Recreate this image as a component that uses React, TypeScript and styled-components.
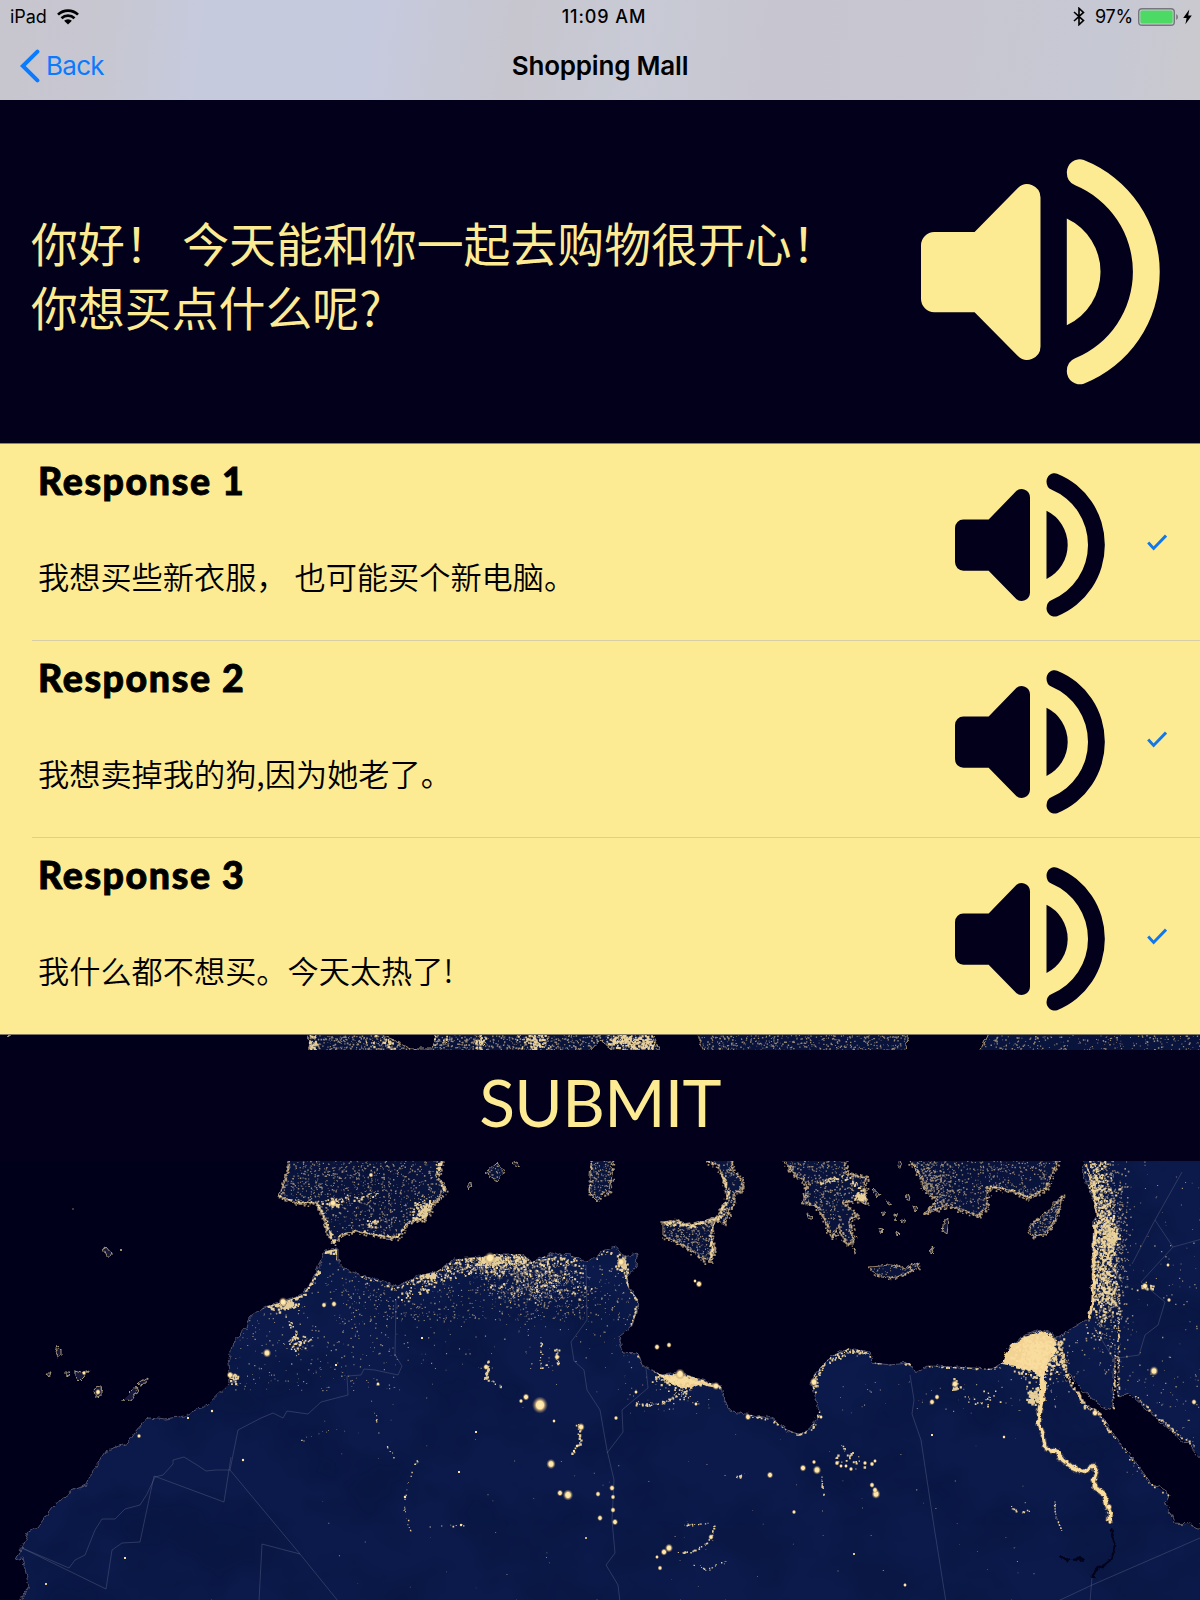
import React from 'react';
import styled, { createGlobalStyle } from 'styled-components';

const NAVY = '#02001a';
const CREAM = '#fdeb94';

const GlobalStyle = createGlobalStyle`
  *, *::before, *::after { box-sizing: border-box; }
  body { margin: 0; background: ${NAVY}; }
`;

const Screen = styled.div`
  width: 1200px;
  height: 1600px;
  display: flex;
  flex-direction: column;
  overflow: hidden;
  background: ${NAVY};
  font-family: Inter, 'Liberation Sans', sans-serif;
  color: #000;
`;

const TopBar = styled.header`
  height: 100px;
  flex: none;
  background: linear-gradient(98deg, #c7c6cf 0%, #c7c7d1 9%, #c6cadd 17%, #c6cade 31%, #c6c8d6 37%, #c7c6cf 43%,
    #c8cad5 53%, #c7c6d0 64%, #c8c7d1 80%, #c6c8d4 91%, #cac9ce 100%);
`;

const StatusBar = styled.div`
  height: 33px;
  display: grid;
  grid-template-columns: 1fr auto 1fr;
  align-items: center;
  padding: 0 8px 0 10px;
  font-size: 18px;
`;

const StatusGroup = styled.div<{ $end?: boolean }>`
  display: flex;
  align-items: center;
  justify-content: ${(p) => (p.$end ? 'flex-end' : 'flex-start')};
`;

const Carrier = styled.span`
  margin-right: 10px;
  letter-spacing: -0.1px;
`;

const Clock = styled.span`
  font-weight: 500;
  letter-spacing: 0.9px;
  padding-left: 6px;
`;

const Percent = styled.span`
  margin: 0 5px 0 10px;
  letter-spacing: -0.2px;
`;

const NavBar = styled.nav`
  height: 65px;
  display: grid;
  grid-template-columns: 1fr auto 1fr;
  align-items: center;
  padding: 0 20px;
`;

const BackButton = styled.button`
  display: flex;
  align-items: center;
  gap: 6px;
  justify-self: start;
  border: 0;
  padding: 0;
  background: none;
  color: #0a7aff;
  font: 400 26px/32px Inter, 'Liberation Sans', sans-serif;
  letter-spacing: -0.7px;
`;

const Title = styled.h1`
  margin: 0;
  font-size: 26px;
  line-height: 32px;
  font-weight: 600;
  letter-spacing: -0.2px;
`;

const Prompt = styled.section`
  height: 343px;
  flex: none;
  display: flex;
  justify-content: space-between;
  padding: 59px 40px 0 31px;
  color: ${CREAM};
`;

const PromptText = styled.p`
  margin: 52px 0 0;
  font: 400 46.9px/63.5px 'Noto Sans CJK SC', sans-serif;
  white-space: pre;
`;

const Responses = styled.ul`
  list-style: none;
  margin: 0;
  padding: 0;
  flex: none;
  border-top: 1px solid #8f866a;
  background: ${CREAM};
`;

const ResponseRow = styled.li<{ $last?: boolean }>`
  height: 197px;
  display: flex;
  margin-left: ${(p) => (p.$last ? 0 : 32)}px;
  padding: 29px 33px 0 ${(p) => (p.$last ? 38 : 6)}px;
  border-bottom: 1px solid ${(p) => (p.$last ? '#7d7763' : '#d8cda9')};
`;

const ResponseBody = styled.div`
  flex: 1;
  margin-top: -14px;
`;

const ResponseTitle = styled.h2`
  margin: 0;
  font: 900 37.5px/44px Lato, 'Open Sans', sans-serif;
  letter-spacing: 1.6px;
  -webkit-text-stroke: 0.9px #000;
`;

const ResponseText = styled.p`
  margin: 50px 0 0;
  font: 400 31.2px/46px 'Noto Sans CJK SC', sans-serif;
  font-weight: 350;
  white-space: pre;
`;

const CheckIcon = styled.svg`
  display: block;
  margin: 61px 0 0 42px;
`;

const Stage = styled.main`
  flex: 1;
  display: grid;
  grid-template: 565px / 1200px;
`;

const NightMap = styled.svg`
  grid-area: 1 / 1;
  display: block;
`;

const SubmitButton = styled.button`
  grid-area: 1 / 1;
  z-index: 1;
  align-self: start;
  height: 111px;
  margin-top: 15px;
  border: 0;
  padding: 0 0 8px;
  background: ${NAVY};
  color: ${CREAM};
  font: 400 66px/103px Lato, 'Open Sans', sans-serif;
  letter-spacing: -0.7px;
`;

const IconSvg = styled.svg`
  display: block;
  flex: none;
`;

const ChargeBolt = styled(IconSvg)`
  margin-left: 4px;
`;

function Speaker({ width, height, color }: { width: number; height: number; color: string }) {
  return (
    <IconSvg width={width} height={height} viewBox="63 57 718 677" preserveAspectRatio="none" fill={color}>
      <path d="M103 276H224L354 144A40 40 0 0 1 422 172V619A40 40 0 0 1 354 647L224 516H103A40 40 0 0 1 63 476V316A40 40 0 0 1 103 276Z" />
      <path d="M501 235A177 177 0 0 1 501 555Z" />
      <path d="M501 97A39 39 0 0 1 552 60A360 360 0 0 1 552 730A39 39 0 0 1 501 693Q501 664 526 654A280 280 0 0 0 526 136Q501 126 501 97Z" />
    </IconSvg>
  );
}

/* ---------- Night-time map ---------- */

const AFRICA =
  'M20 1600L29 1587L25 1570L22 1558L16 1560L22 1547L28 1533L38 1527L48 1513L60 1499L69 1492L86 1485L92 1472L107 1450L128 1443L135 1433L149 1417L166 1419L184 1416L207 1405L230 1383L228 1363L233 1343L246 1328L249 1317L264 1307L283 1302L302 1295L308 1287L318 1270L325 1251L337 1249L337 1260L346 1270L360 1275L377 1280L396 1287L421 1275L436 1272L455 1259L482 1257L494 1254L522 1254L532 1262L553 1253L570 1255L585 1261L597 1257L600 1252L615 1247L623 1257L637 1254L636 1267L627 1277L629 1288L638 1300L637 1312L631 1327L619 1337L623 1352L638 1353L642 1365L661 1375L680 1373L703 1380L721 1386L724 1402L732 1412L753 1415L772 1419L787 1430L799 1434L810 1430L819 1410L812 1385L814 1375L830 1357L849 1348L870 1352L872 1362L889 1365L910 1363L916 1373L929 1366L956 1367L992 1369L1002 1363L1009 1347L1025 1335L1042 1330L1057 1337L1078 1325L1089 1318L1092 1303L1092 1253L1094 1220L1099 1213L1090 1193L1085 1180L1082 1167L1088 1150L1202 1150L1202 1602L20 1602Z';
const RED_SEA =
  'M1064 1377L1069 1373L1082 1390L1097 1403L1110 1411L1113 1397L1115 1357L1118 1357L1118 1397L1130 1394L1147 1410L1170 1430L1191 1447L1202 1460L1202 1530L1189 1524L1174 1523L1166 1503L1170 1495L1151 1483L1136 1463L1115 1437L1101 1415L1084 1403L1075 1390Z';
const IBERIA =
  'M289 1150L289 1161L285 1180L279 1197L298 1203L316 1203L323 1217L327 1233L334 1244L341 1235L356 1231L385 1237L398 1238L408 1222L425 1220L434 1203L446 1190L438 1177L443 1161L443 1150Z';
const ITALY =
  'M700 1150L707 1161L719 1167L724 1183L727 1197L720 1210L717 1220L724 1224L728 1213L734 1203L734 1193L742 1192L742 1178L732 1172L731 1161L731 1150Z';
const SICILY = 'M663 1222L676 1220L690 1225L717 1217L711 1233L714 1250L711 1262L699 1257L682 1245L663 1235Z';
const SARDINIA = 'M591 1150L591 1161L589 1193L597 1201L602 1194L610 1193L613 1161L613 1150Z';
const GREECE =
  'M780 1150L784 1161L795 1175L807 1183L803 1202L818 1207L826 1223L832 1238L839 1227L845 1243L854 1243L849 1220L858 1217L849 1207L843 1202L858 1200L867 1203L864 1187L866 1177L845 1173L845 1150Z';
const ANATOLIA =
  'M910 1150L910 1161L921 1177L925 1190L937 1200L925 1213L948 1205L967 1212L977 1216L987 1207L987 1187L1009 1190L1029 1198L1046 1188L1057 1163L1060 1150Z';
const CRETE = 'M869 1267L875 1275L895 1278L918 1268L919 1262L906 1268L891 1265Z';
const CYPRUS = 'M1029 1228L1036 1220L1046 1213L1063 1195L1055 1220L1046 1233L1032 1237Z';
const MAJORCA = 'M486 1173L497 1163L505 1172L497 1181Z';
const NORTH_STRIP =
  'M308 1030H369L394 1040L411 1049L432 1049L436 1030H650L660 1052H615L600 1040L589 1052H309ZM694 1030H908L905 1052H705ZM990 1030H1202V1052H980Z';
const EUROPE = [IBERIA, ITALY, SICILY, SARDINIA, GREECE, ANATOLIA, CRETE, CYPRUS, MAJORCA, NORTH_STRIP].join('');

const ISLETS =
  'M103 1249l3 -2l5 6l0 3l-5 0zM58 1346l3 3l0 6l-3 2l-2 -5zM46 1373l5 0l-2 4zM65 1372l4 0l-1 3l-3 -1zM75 1371l6 2l8 -3l-5 7l-5 5l-4 -5zM94 1391l4 -5l4 3l0 7l-6 2zM122 1401l10 -10l3 -5l2 5l-6 9zM138 1384l9 -6l-1 6l-7 1zM466 1187l3 -4l3 2l-4 5zM513 1163l4 -2l3 6l-3 1zM944 1221l4 -2l-2 15l-4 -3zM931 1244l3 8l-2 2zM853 1247l4 5l-2 1zM872 1190l8 5l-2 3zM886 1199l6 5l-3 1zM904 1198l6 -3l-1 5zM882 1210l3 2l-1 4zM895 1214l3 1l-2 5zM901 1222l5 -3l-2 5zM878 1229l5 1l-3 3zM896 1231l4 2l-3 3zM913 1206l5 2l-3 3zM8 1036l4 0l-2 1zM897 1166l2 -8l3 6l-1 5zM807 1213l4 2l1 4l-3 0z';

const BORDERS =
  'M396 1300L395 1355L402 1366L398 1375L375 1370L364 1369L361 1375L347 1376L348 1395L321 1402L308 1414L287 1411L283 1418L273 1413L261 1418L238 1430L230 1470L300 1554L338 1601M230 1470L216 1470L206 1471L197 1465L184 1457L173 1460L173 1464L163 1475L155 1477L147 1494L140 1505L125 1509L115 1519L102 1519L95 1530L85 1555L75 1560L69 1568L22 1548L106 1589L112 1550L122 1543L140 1542L154 1476L224 1502L231 1457M259 1601L262 1544L300 1554M586 1265L587 1320L571 1342L574 1361L584 1370L587 1390L600 1410L607 1450L614 1480L612 1520L615 1553L606 1565L618 1585L620 1602M646 1368L648 1388L622 1410L623 1432L607 1453M910 1375L914 1400L912 1414L921 1440L933 1520L946 1602M1200 1538L1092 1585L1058 1601M1155 1220L1132 1264M1155 1220L1173 1247L1141 1282L1165 1302L1158 1325L1145 1335L1139 1355L1118 1358M1173 1247L1202 1239M1182 1172L1155 1220M1094 1327L1116 1363M1092 1577L1090 1602';

function createRandom(seed: number) {
  let s = seed;
  return () => {
    s = (s + 0x6d2b79f5) | 0;
    let t = Math.imul(s ^ (s >>> 15), 1 | s);
    t = (t + Math.imul(t ^ (t >>> 7), 61 | t)) ^ t;
    return ((t ^ (t >>> 14)) >>> 0) / 4294967296;
  };
}

const random = createRandom(7431);
const gauss = () => random() + random() + random() - 1.5;

function dot(x: number, y: number, s: number) {
  return `M${x.toFixed(1)} ${y.toFixed(1)}h${s.toFixed(1)}v${s.toFixed(1)}h-${s.toFixed(1)}z`;
}

/* Rows are [x, y, width, height, count, dot size] */
type Area = [number, number, number, number, number, number];

function uniform(areas: Area[]) {
  let d = '';
  areas.forEach(([x, y, w, h, n, s]) => {
    for (let i = 0; i < n; i++) d += dot(x + random() * w, y + random() * h, s * (0.5 + random() * 0.8));
  });
  return d;
}

/* Rows are [cx, cy, rx, ry, count, dot size] */
function clustered(areas: Area[]) {
  let d = '';
  areas.forEach(([x, y, rx, ry, n, s]) => {
    for (let i = 0; i < n; i++) d += dot(x + gauss() * rx, y + gauss() * ry, s * (0.5 + random() * 0.9));
  });
  return d;
}

function along(points: number[][], perPx: number, spread: number, size: number) {
  let d = '';
  for (let i = 1; i < points.length; i++) {
    const [ax, ay] = points[i - 1];
    const [bx, by] = points[i];
    const n = Math.max(1, Math.round(Math.hypot(bx - ax, by - ay) * perPx));
    for (let k = 0; k < n; k++) {
      const t = random();
      d += dot(ax + (bx - ax) * t + gauss() * spread, ay + (by - ay) * t + gauss() * spread, size * (0.5 + random()));
    }
  }
  return d;
}

/* Parses an absolute M/L outline into its points so that lights can follow the coast */
function outline(path: string) {
  return path
    .replace(/[MZ]/g, '')
    .split('L')
    .map((p) => p.split(' ').map(Number));
}

const DIM_LIGHTS =
  uniform([
    [279, 1155, 170, 90, 1300, 1.2],
    [308, 1035, 350, 16, 1000, 1.3],
    [694, 1035, 215, 16, 500, 1.2],
    [980, 1035, 220, 16, 240, 1.2],
    [663, 1215, 55, 48, 520, 1.2],
    [587, 1155, 28, 48, 260, 1.2],
    [700, 1155, 45, 70, 330, 1.2],
    [780, 1155, 90, 90, 900, 1.2],
    [905, 1155, 155, 65, 1000, 1.2],
    [1028, 1193, 36, 44, 320, 1.1],
    [869, 1260, 52, 20, 90, 1],
    [485, 1162, 22, 20, 80, 1.1],
    [230, 1260, 170, 130, 420, 1.1],
    [340, 1265, 290, 55, 600, 1.1],
    [400, 1300, 230, 70, 140, 1],
    [1130, 1160, 70, 260, 90, 1.1],
    [620, 1350, 90, 65, 70, 1],
    [820, 1380, 240, 35, 50, 1],
    [300, 1380, 320, 220, 40, 0.9],
    [640, 1430, 400, 160, 50, 0.9],
    [1120, 1370, 80, 110, 80, 1.1],
  ]) +
  clustered([
    [535, 1280, 46, 26, 640, 1.1],
    [495, 1264, 60, 12, 500, 1.1],
    [330, 1180, 70, 40, 200, 1],
    [1108, 1240, 19, 110, 1300, 1.2],
    [1046, 1358, 34, 30, 260, 1.2],
    [930, 1185, 26, 34, 320, 1.3],
  ]);

const COAST_LIGHTS =
  along(outline(IBERIA), 1, 2.2, 1.3) +
  along(outline(ITALY), 1.2, 3, 1.3) +
  along(outline(SICILY), 1.2, 2.4, 1.3) +
  along(outline(SARDINIA), 0.9, 2, 1.2) +
  along(outline(GREECE), 1.3, 3, 1.3) +
  along(outline(ANATOLIA), 1.3, 3, 1.3) +
  along(outline(CRETE), 0.8, 1.6, 1.1) +
  along(outline(CYPRUS), 1, 2, 1.2);

const LIGHTS =
  clustered([
    [536, 1278, 46, 24, 170, 1.6],
    [487, 1259, 12, 6, 120, 1.9],
    [505, 1260, 44, 8, 200, 1.6],
    [427, 1274, 14, 6, 80, 1.8],
    [283, 1304, 16, 6, 100, 1.8],
    [297, 1342, 8, 8, 45, 1.6],
    [232, 1378, 5, 5, 25, 1.8],
    [333, 1203, 6, 5, 40, 1.7],
    [373, 1222, 5, 4, 20, 1.7],
    [423, 1210, 9, 12, 110, 1.7],
    [861, 1197, 7, 7, 90, 1.7],
    [1103, 1250, 13, 70, 620, 1.7],
    [1104, 1290, 12, 22, 130, 1.7],
    [1112, 1236, 7, 12, 90, 1.8],
    [1096, 1180, 10, 35, 220, 1.5],
    [1037, 1355, 23, 21, 500, 1.8],
    [682, 1379, 24, 5, 240, 1.7],
    [682, 1388, 10, 14, 60, 1.4],
    [621, 1262, 5, 7, 60, 1.8],
    [405, 1041, 40, 7, 100, 1.7],
    [312, 1042, 5, 12, 60, 1.6],
    [535, 1041, 14, 10, 110, 1.7],
    [480, 1040, 5, 10, 40, 1.6],
    [640, 1043, 22, 10, 200, 1.7],
    [618, 1040, 14, 8, 90, 1.6],
    [1034, 1396, 7, 8, 100, 1.9],
    [955, 1385, 4, 8, 18, 1.8],
    [850, 1461, 18, 10, 14, 1.8],
    [980, 1400, 25, 8, 24, 1.4],
    [1145, 1286, 8, 4, 16, 1.8],
  ]) +
  along([[279, 1197], [298, 1203], [316, 1203], [325, 1220], [334, 1243], [341, 1235], [356, 1231], [398, 1238]], 1.2, 1.8, 1.5) +
  along([[316, 1203], [350, 1198], [380, 1193]], 0.8, 3, 1.4) +
  along([[325, 1251], [337, 1250], [337, 1260]], 2.5, 2, 1.8) +
  along([[398, 1238], [410, 1221], [434, 1205], [446, 1190], [438, 1174], [439, 1161]], 2, 3.4, 1.6) +
  along([[264, 1307], [302, 1295], [318, 1270]], 1.3, 2, 1.6) +
  along([[283, 1316], [295, 1330], [298, 1345], [318, 1336]], 0.6, 2.4, 1.3) +
  along([[360, 1275], [396, 1287], [436, 1272], [460, 1258], [522, 1256], [570, 1260], [610, 1252]], 0.9, 4, 1.5) +
  along([[396, 1298], [425, 1288], [455, 1270], [500, 1268]], 0.9, 6, 1.4) +
  along([[623, 1257], [628, 1285], [638, 1300], [632, 1325]], 1.8, 2, 1.6) +
  along([[636, 1353], [661, 1375], [721, 1386]], 1.1, 2, 1.6) +
  along([[635, 1403], [658, 1404], [678, 1395]], 1, 2, 1.3) +
  along([[813, 1390], [816, 1372], [830, 1358], [850, 1350], [870, 1353]], 2.2, 4, 1.2) +
  along([[872, 1362], [910, 1363], [956, 1367], [1000, 1367]], 0.7, 1.5, 1.5) +
  along([[745, 1415], [770, 1419], [799, 1434], [812, 1428], [819, 1410]], 0.5, 1.5, 1.5) +
  along([[707, 1161], [723, 1180], [727, 1197], [720, 1215]], 1.6, 3, 1.5) +
  along([[663, 1222], [690, 1225], [717, 1217], [712, 1235], [711, 1260]], 1.4, 2.5, 1.6) +
  along([[987, 1187], [1009, 1190], [1029, 1198], [1046, 1188]], 1.2, 2, 1.5) +
  along([[818, 1182], [845, 1176], [862, 1190]], 1.2, 2.5, 1.4) +
  along([[677, 1552], [690, 1552], [705, 1544], [712, 1535], [714, 1525]], 0.8, 1, 1.2) +
  along([[681, 1525], [709, 1523]], 0.6, 1, 1) +
  along([[692, 1565], [705, 1569], [726, 1562]], 0.5, 2, 1) +
  along([[541, 1335], [540, 1370], [548, 1363]], 0.5, 1, 1.2) +
  along([[488, 1360], [485, 1378]], 1.2, 1.6, 1.8) +
  along([[485, 1378], [502, 1386]], 0.6, 2, 1.5) +
  along([[557, 1350], [557, 1364]], 1.4, 2, 1.5) +
  along([[372, 1400], [380, 1437], [395, 1458]], 0.2, 1, 1) +
  along([[420, 1452], [407, 1485], [404, 1510], [411, 1532]], 0.3, 1, 1) +
  along([[430, 1527], [465, 1524]], 0.2, 1.2, 1.2) +
  along([[578, 1424], [580, 1440], [572, 1453]], 0.6, 2, 1.6) +
  along([[734, 1478], [744, 1474]], 1, 1.6, 1.2) +
  along([[821, 1475], [823, 1496]], 0.5, 0.8, 1.5) +
  along([[842, 1446], [853, 1458]], 0.9, 2.4, 1.4) +
  along([[1054, 1500], [1055, 1515], [1061, 1530]], 0.8, 0.6, 1.1) +
  along([[1010, 1506], [1020, 1513], [1028, 1510]], 0.6, 1.5, 1.3) +
  along([[297, 1442], [320, 1432], [345, 1429]], 0.2, 1.5, 1);

const RED_SEA_LIGHTS =
  along([[1057, 1337], [1063, 1360], [1066, 1374], [1084, 1405], [1098, 1412], [1110, 1432]], 1.1, 1.8, 1.6) +
  along([[1112, 1434], [1150, 1484], [1170, 1496]], 0.25, 1.2, 1.2) +
  along([[1133, 1394], [1149, 1409], [1172, 1429], [1195, 1447]], 0.6, 1.5, 1.4) +
  along([[1115, 1354], [1114, 1385], [1113, 1410]], 0.6, 1, 1.2) +
  along([[1119, 1290], [1118, 1350], [1118, 1395]], 0.7, 1.2, 1.2);

const CITIES: [number, number, number][] = [
  [540, 1405, 7], [551, 1464, 4.2], [568, 1495, 4.6], [560, 1493, 2.8], [581, 1427, 3.4], [526, 1397, 3],
  [267, 1353, 3.8], [283, 1302, 4], [334, 1304, 2.6], [324, 1305, 2.4], [490, 1258, 5], [486, 1367, 2.6],
  [557, 1357, 2.6], [598, 1494, 2.4], [600, 1518, 2.6], [612, 1488, 2.6], [613, 1497, 2.2], [613, 1510, 2.4],
  [615, 1522, 2.8], [669, 1548, 3.6], [664, 1552, 3], [660, 1568, 2.2], [657, 1557, 1.8], [711, 1537, 2.5],
  [699, 1284, 3], [695, 1281, 1.7], [657, 1347, 2.6], [669, 1345, 2.4], [770, 1475, 2.9], [803, 1468, 3],
  [817, 1470, 3.8], [814, 1462, 2], [837, 1463, 2.2], [841, 1466, 1.8], [846, 1466, 1.8], [851, 1469, 2],
  [865, 1463, 2], [872, 1464, 2.2], [875, 1461, 1.8], [872, 1485, 2.4], [876, 1494, 4], [875, 1490, 2.6],
  [794, 1512, 2], [1154, 1371, 4], [955, 1384, 3.4], [937, 1397, 2.4], [932, 1402, 2.6], [1095, 1413, 3],
  [814, 1382, 3.8], [680, 1374, 4.5], [716, 1386, 3.4], [748, 1417, 2.8], [1109, 1507, 3], [1110, 1522, 2],
  [333, 1203, 3.4], [371, 1175, 2.2], [230, 1375, 3], [139, 1436, 2], [98, 1392, 2.6], [84, 1373, 2],
  [905, 1585, 1.8], [1194, 1402, 2.5], [1145, 1286, 3], [1169, 1300, 2], [1168, 1265, 1.8], [621, 1262, 3.6],
  [476, 1432, 1.3], [459, 1472, 1.3], [46, 1584, 1.2], [586, 1538, 1.1], [243, 1460, 1.5], [405, 1497, 1.6],
  [461, 1525, 1.5], [188, 1418, 1.3], [212, 1411, 1.5], [422, 1338, 1.3], [336, 1365, 1.3], [378, 1384, 1.8],
  [696, 1404, 1.8], [636, 1392, 1.8], [616, 1418, 2], [821, 1417, 1.8], [932, 1435, 1.3], [1004, 1437, 1.6],
  [521, 1401, 2], [554, 1421, 1.7], [577, 1446, 1.6], [574, 1451, 1.5], [121, 1250, 1],
  [73, 1209, 0.8], [854, 1554, 1.2], [125, 1558, 1.3],
];

const NILE =
  'M1042 1376L1043 1395L1039 1412L1039 1425L1044 1438L1046 1449L1056 1451L1063 1460L1072 1467L1084 1472L1093 1466L1096 1472L1093 1482L1097 1490L1105 1496L1107 1505L1110 1513L1109 1522';
const LAKE =
  'M1111 1528l2 10l3 8l-4 6l0 6l-7 6l-6 4l-5 6l-1 5M1061 1557l5 3l4 -2M1072 1561l6 -3l5 2';

function Map() {
  return (
    <NightMap width="1200" height="565" viewBox="0 1035 1200 565">
      <defs>
        <clipPath id="land">
          <path d={AFRICA + EUROPE} />
        </clipPath>
        <filter id="rough" x="0" y="1030" width="1200" height="575" filterUnits="userSpaceOnUse" colorInterpolationFilters="sRGB">
          <feTurbulence type="fractalNoise" baseFrequency="0.14" numOctaves="3" seed="5" result="n" />
          <feDisplacementMap in="SourceGraphic" in2="n" scale="6" xChannelSelector="R" yChannelSelector="G" />
        </filter>
        <filter id="terrain" x="0" y="1030" width="1200" height="575" filterUnits="userSpaceOnUse" colorInterpolationFilters="sRGB">
          <feTurbulence type="fractalNoise" baseFrequency="0.012 0.014" numOctaves="4" seed="11" />
          <feColorMatrix values="0 0 0 0 0.02  0 0 0 0 0.03  0 0 0 0 0.15  2.2 0 0 0 -0.9" />
        </filter>
        <radialGradient id="city">
          <stop offset="0" stopColor="#fff0bd" />
          <stop offset="0.45" stopColor="#ffe3a0" />
          <stop offset="0.7" stopColor="#c9a878" stopOpacity="0.55" />
          <stop offset="1" stopColor="#8a7360" stopOpacity="0" />
        </radialGradient>
      </defs>
      <rect y="1035" width="1200" height="565" fill="#01001a" />
      <g filter="url(#rough)">
        <path d={AFRICA} fill="#0b1a4a" stroke="#68657a" strokeWidth="0.8" />
        <path d={EUROPE} fill="#0a153e" stroke="#b39c78" strokeWidth="0.9" />
        <path d={ISLETS} fill="#17193a" stroke="#b8a684" strokeWidth="0.9" />
      </g>
      <g clipPath="url(#land)">
        <rect y="1035" width="1200" height="565" filter="url(#terrain)" opacity="0.22" />
        <path d={DIM_LIGHTS} fill="#cdb68f" opacity="0.72" />
      </g>
      <path d={RED_SEA} fill="#01001a" />
      <path d={RED_SEA} fill="#01001a" stroke="#77707a" strokeWidth="0.8" filter="url(#rough)" />
      <path d={BORDERS} fill="none" stroke="#747a9b" strokeWidth="0.8" opacity="0.42" />
      <path d={LAKE} fill="none" stroke="#03031c" strokeWidth="2.6" filter="url(#rough)" />
      <path d={COAST_LIGHTS} fill="#e2c491" opacity="0.75" />
      <g filter="url(#rough)">
        <path d="M1005 1353L1012 1345L1025 1337L1042 1331L1056 1338L1055 1352L1047 1365L1044 1380L1038 1379L1032 1371L1015 1366L1001 1364Z" fill="#f3d394" />
        <path d="M655 1373L672 1377L680 1373L690 1380L704 1381L718 1386L718 1388L700 1385L690 1389L675 1386Z" fill="#e9c98d" />
        <path d={NILE} fill="none" stroke="#8c785f" strokeWidth="6" opacity="0.5" />
        <path d={NILE} fill="none" stroke="#fbdd9b" strokeWidth="3.8" strokeLinejoin="round" />
        <path d="M1042 1375L1043 1400" stroke="#f7d897" strokeWidth="5" />
        <path d="M1095 1225L1093 1300L1089 1318" fill="none" stroke="#eccb8d" strokeWidth="3" />
        <path d="M1087 1165L1094 1195L1098 1215" fill="none" stroke="#dbbb85" strokeWidth="2" />
      </g>
      <g clipPath="url(#land)">
        <path d={LIGHTS} fill="#f9dda0" opacity="0.92" />
      </g>
      <path d={RED_SEA_LIGHTS} fill="#f3d59a" opacity="0.92" />
      {CITIES.map(([x, y, r], i) => (
        <ellipse key={i} cx={x} cy={y} rx={r * 1.15} ry={r * 1.25} fill="url(#city)" />
      ))}
    </NightMap>
  );
}

const responses = [
  { title: 'Response 1', text: '我想买些新衣服， 也可能买个新电脑。' },
  { title: 'Response 2', text: '我想卖掉我的狗,因为她老了。' },
  { title: 'Response 3', text: '我什么都不想买。今天太热了!' },
];

export default function App() {
  return (
    <Screen>
      <GlobalStyle />
      <TopBar>
        <StatusBar>
          <StatusGroup>
            <Carrier>iPad</Carrier>
            <IconSvg width="22" height="16" viewBox="0 0 22 16">
              <g fill="none" stroke="#000" strokeWidth="2.7">
                <path d="M1 5.6A14.4 14.4 0 0 1 21 5.6" />
                <path d="M4.5 9.3A9.3 9.3 0 0 1 17.5 9.3" />
              </g>
              <path d="M11 15.6L7.1 11.8A5.5 5.5 0 0 1 14.9 11.8Z" />
            </IconSvg>
          </StatusGroup>
          <Clock>11:09 AM</Clock>
          <StatusGroup $end>
            <IconSvg width="12" height="19" viewBox="0 0 12 19">
              <path d="M1 5L10.5 13.6L6 17.7V1.3L10.5 5.4L1 14" fill="none" stroke="#000" strokeWidth="1.6" />
            </IconSvg>
            <Percent>97%</Percent>
            <IconSvg width="41" height="18" viewBox="0 0 41 18">
              <rect x="0.7" y="0.7" width="35.6" height="16.6" rx="3.4" fill="none" stroke="#77767d" strokeWidth="1.4" />
              <rect x="2.4" y="2.6" width="32.2" height="12.8" rx="1.6" fill="#4cd964" />
              <path d="M38.2 6A3.4 3.4 0 0 1 38.2 12Z" fill="#77767d" />
            </IconSvg>
            <ChargeBolt width="9" height="16" viewBox="0 0 9 16">
              <path d="M6.3 0.6L0.2 8.9H3.6L2.4 15.3L8.8 6.6H5.2Z" />
            </ChargeBolt>
          </StatusGroup>
        </StatusBar>
        <NavBar>
          <BackButton>
            <IconSvg width="20" height="34" viewBox="0 0 20 34">
              <path d="M17.4 2.6L2.8 17L17.4 31.4" fill="none" stroke="#0a7aff" strokeWidth="4" strokeLinecap="round" />
            </IconSvg>
            Back
          </BackButton>
          <Title>Shopping Mall</Title>
        </NavBar>
      </TopBar>
      <Prompt>
        <PromptText lang="zh-CN">{'你好！ 今天能和你一起去购物很开心！\n你想买点什么呢?'}</PromptText>
        <Speaker width={239} height={226} color={CREAM} />
      </Prompt>
      <Responses>
        {responses.map((r, i) => (
          <ResponseRow key={r.title} $last={i === responses.length - 1}>
            <ResponseBody>
              <ResponseTitle>{r.title}</ResponseTitle>
              <ResponseText lang="zh-CN">{r.text}</ResponseText>
            </ResponseBody>
            <Speaker width={150} height={144} color={NAVY} />
            <CheckIcon width="20" height="17" viewBox="0 0 20 17">
              <path d="M1.2 8.6L6.6 14.4L19 1.6" fill="none" stroke="#1278ea" strokeWidth="2.9" />
            </CheckIcon>
          </ResponseRow>
        ))}
      </Responses>
      <Stage>
        <Map />
        <SubmitButton>SUBMIT</SubmitButton>
      </Stage>
    </Screen>
  );
}
